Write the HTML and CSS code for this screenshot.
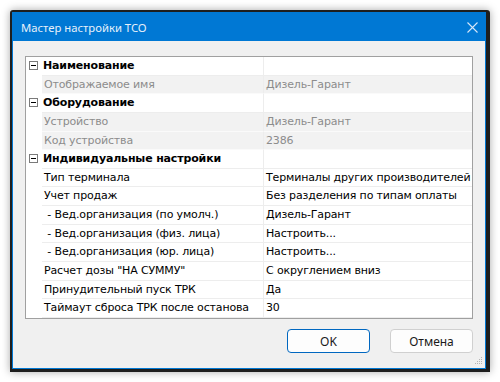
FILE: index.html
```html
<!DOCTYPE html>
<html lang="ru">
<head>
    <meta charset="UTF-8">
    <title>Мастер настройки TCO</title>
    <link rel="stylesheet" href="styles.css">
</head>
<body>
    <div class="window">
        <div class="frame">
            <div class="titlebar">
                <span class="title">Мастер настройки TCO</span>
                <svg class="close" width="11" height="11" viewBox="0 0 11 11">
                    <path d="M0.5 0.5 L10.5 10.5 M10.5 0.5 L0.5 10.5" stroke="#d6e7f8" stroke-width="1.1" fill="none"/>
                </svg>
            </div>
            <div class="client">
                <div class="grid">
                    <div class="row cat"><span class="margin"><i class="box"></i></span><span class="name">Наименование</span><span class="value"></span></div>
                    <div class="row off"><span class="margin"></span><span class="name">Отображаемое имя</span><span class="value">Дизель-Гарант</span></div>
                    <div class="row cat"><span class="margin"><i class="box"></i></span><span class="name">Оборудование</span><span class="value"></span></div>
                    <div class="row off"><span class="margin"></span><span class="name">Устройство</span><span class="value">Дизель-Гарант</span></div>
                    <div class="row off"><span class="margin"></span><span class="name">Код устройства</span><span class="value">2386</span></div>
                    <div class="row cat"><span class="margin"><i class="box"></i></span><span class="name">Индивидуальные настройки</span><span class="value"></span></div>
                    <div class="row"><span class="margin"></span><span class="name">Тип терминала</span><span class="value">Терминалы других производителей</span></div>
                    <div class="row"><span class="margin"></span><span class="name">Учет продаж</span><span class="value">Без разделения по типам оплаты</span></div>
                    <div class="row"><span class="margin"></span><span class="name">&nbsp;- Вед.организация (по умолч.)</span><span class="value">Дизель-Гарант</span></div>
                    <div class="row"><span class="margin"></span><span class="name">&nbsp;- Вед.организация (физ. лица)</span><span class="value">Настроить...</span></div>
                    <div class="row"><span class="margin"></span><span class="name">&nbsp;- Вед.организация (юр. лица)</span><span class="value">Настроить...</span></div>
                    <div class="row"><span class="margin"></span><span class="name">Расчет дозы "НА СУММУ"</span><span class="value">С округлением вниз</span></div>
                    <div class="row"><span class="margin"></span><span class="name">Принудительный пуск ТРК</span><span class="value">Да</span></div>
                    <div class="row"><span class="margin"></span><span class="name">Таймаут сброса ТРК после останова</span><span class="value">30</span></div>
                </div>
                <div class="buttons">
                    <button class="btn default">OK</button>
                    <button class="btn">Отмена</button>
                </div>
                <svg class="grip" width="8" height="8" viewBox="0 0 8 8">
                    <g fill="#b4b4b4">
                        <rect x="6" y="0" width="1" height="1"/>
                        <rect x="4" y="2" width="1" height="1"/>
                        <rect x="6" y="2" width="1" height="1"/>
                        <rect x="2" y="4" width="1" height="1"/>
                        <rect x="4" y="4" width="1" height="1"/>
                        <rect x="6" y="4" width="1" height="1"/>
                        <rect x="0" y="6" width="1" height="1"/>
                        <rect x="2" y="6" width="1" height="1"/>
                        <rect x="4" y="6" width="1" height="1"/>
                        <rect x="6" y="6" width="1" height="1"/>
                    </g>
                </svg>
            </div>
        </div>
    </div>
</body>
</html>
```

FILE: styles.css
```css
body {
    margin: 0;
    padding: 0;
    background: #fff;
    font-family: "Noto Sans", "Open Sans", sans-serif;
}

.window {
    margin: 10px;
    width: 480px;
    height: 362px;
    box-sizing: border-box;
    border: 2px solid #1e1e1e;
    border-right-width: 4px;
    border-bottom-width: 3px;
    border-radius: 3px 3px 0 0;
    box-shadow: 0 0 8px rgba(0, 0, 0, 0.35);
}

.frame {
    height: 100%;
    box-sizing: border-box;
    border: 1px solid #0078d4;
    display: flex;
    flex-direction: column;
}

.titlebar {
    height: 28px;
    background: #0078d4;
    display: flex;
    align-items: center;
    justify-content: space-between;
    padding: 0 7px 0 8px;
    flex-shrink: 0;
}

.title {
    color: #e6f0fa;
    font-size: 11.3px;
}

.client {
    flex: 1;
    background: #f0f0f0;
    padding: 15px 12px 0 12px;
    position: relative;
}

.grid {
    background: #fff;
    border: 1px solid #a0a0a0;
    height: 263px;
    box-sizing: border-box;
    overflow: hidden;
    font-family: "DejaVu Sans", sans-serif;
    font-size: 11px;
    letter-spacing: -0.15px;
}

.row {
    display: grid;
    grid-template-columns: 16px 221px 1fr;
    height: 18.65px;
    line-height: 18px;
    color: #000;
}

.row .name,
.row .value {
    border-bottom: 1px solid #ededed;
    white-space: nowrap;
    overflow: hidden;
}

.row .name {
    padding-left: 2px;
}

.row .value {
    border-left: 1px solid #ededed;
    padding-left: 2px;
}

.row.cat .name {
    font-weight: bold;
    padding-left: 1px;
}

.row.off .name,
.row.off .value {
    background: #f2f2f2;
    color: #8c8c8c;
    border-bottom-color: #fafafa;
}

.margin {
    position: relative;
}

.box {
    position: absolute;
    left: 3px;
    top: 4px;
    width: 7px;
    height: 7px;
    border: 1px solid #7a7a7a;
    background: #fff;
}

.box::after {
    content: "";
    position: absolute;
    left: 1px;
    top: 3px;
    width: 5px;
    height: 1px;
    background: #000;
}

.buttons {
    display: flex;
    justify-content: flex-end;
    gap: 20px;
    margin-top: 10px;
}

.btn {
    width: 83px;
    height: 24px;
    box-sizing: border-box;
    border: 1px solid #d0d0d0;
    border-radius: 4px;
    background: #fdfdfd;
    font-family: "Noto Sans", "Open Sans", sans-serif;
    font-size: 12px;
    color: #1a1a1a;
    padding: 0;
}

.btn.default {
    border-color: #0067c0;
}

.grip {
    position: absolute;
    right: 2px;
    bottom: 3px;
}
```
